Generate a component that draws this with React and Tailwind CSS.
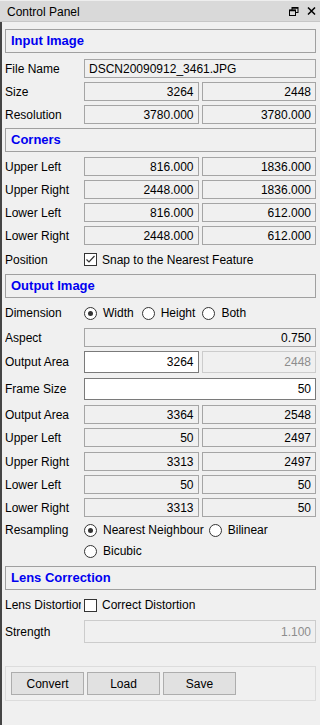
const font = { fontFamily: '"Liberation Sans", Arial, sans-serif' }

function Header({ children, className = '' }) {
  return (
    <div
      className={`h-[24px] border border-[#a0a0a0] flex items-center pl-[5px] text-[13px] font-bold text-[#0000f0] ${className}`}
    >
      {children}
    </div>
  )
}

function Field({ value, kind = 'ro', align = 'right', tall = false }) {
  const styles = {
    ro: 'bg-[#f0f0f0] border-[#a5a5a5] text-black',
    edit: 'bg-white border-[#7a7a7a] text-black',
    off: 'bg-[#f0f0f0] border-[#cccccc] text-[#8d8d8d]',
  }
  return (
    <div
      className={`${tall ? 'h-[22px]' : 'h-[19px]'} border flex items-center px-[4px] whitespace-nowrap overflow-hidden ${
        align === 'right' ? 'justify-end' : 'justify-start'
      } ${styles[kind]}`}
    >
      {value}
    </div>
  )
}

function Row({ label, children, className = '' }) {
  return (
    <div className={`flex items-center ${className}`}>
      <div className="w-[79px] shrink-0">
        <div className="max-w-[76px] whitespace-nowrap overflow-hidden">{label}</div>
      </div>
      <div className="flex-1 min-w-0">{children}</div>
    </div>
  )
}

function Pair({ label, a, b, className = '', kindA = 'ro', kindB = 'ro', tall = false }) {
  return (
    <Row label={label} className={className}>
      <div className="grid grid-cols-2 gap-[3px]">
        <Field value={a} kind={kindA} tall={tall} />
        <Field value={b} kind={kindB} tall={tall} />
      </div>
    </Row>
  )
}

function Radio({ checked, label, className = '' }) {
  return (
    <div className={`flex items-center ${className}`}>
      <span className="w-[13px] h-[13px] rounded-full border border-[#333333] bg-white flex items-center justify-center shrink-0">
        {checked && <span className="w-[5px] h-[5px] rounded-full bg-[#333333]" />}
      </span>
      <span className="ml-[6px] whitespace-nowrap">{label}</span>
    </div>
  )
}

function Checkbox({ checked, label }) {
  return (
    <div className="flex items-center">
      <span className="w-[13px] h-[13px] border border-[#333333] bg-white flex items-center justify-center shrink-0">
        {checked && (
          <svg width="11" height="11" viewBox="0 0 11 11">
            <path d="M1.5 5.5 L4 8 L9.5 2" fill="none" stroke="#333333" strokeWidth="1.2" />
          </svg>
        )}
      </span>
      <span className="ml-[5px] whitespace-nowrap">{label}</span>
    </div>
  )
}

function Btn({ children }) {
  return (
    <button className="w-[73px] h-[23px] bg-[#e1e1e1] border border-[#adadad] text-[12px] text-black flex items-center justify-center">
      {children}
    </button>
  )
}

export default function App() {
  return (
    <div className="w-[320px] h-[725px] bg-[#f0f0f0] text-[12px] text-black flex flex-col" style={font}>
      {/* title bar */}
      <div className="h-[22px] shrink-0 bg-[#d9d9d9] border-t border-[#eeeeee] border-b border-b-[#c6c6c6] flex items-center pl-[7px] pr-[4px]">
        <span className="flex-1 pt-[1px]">Control Panel</span>
        <svg width="10" height="9" viewBox="0 0 10 9" className="mr-[8px]">
          <rect x="3" y="0.5" width="6" height="5" fill="none" stroke="#000" />
          <rect x="0.5" y="3" width="6" height="5.5" fill="#d9d9d9" stroke="#000" />
          <line x1="0.5" y1="3.5" x2="6.5" y2="3.5" stroke="#000" strokeWidth="1.5" />
          <line x1="3" y1="1" x2="9" y2="1" stroke="#000" strokeWidth="1.5" />
        </svg>
        <svg width="9" height="8" viewBox="0 0 9 8">
          <path d="M1 0.5 L8 7.5 M8 0.5 L1 7.5" stroke="#000" strokeWidth="1.5" />
        </svg>
      </div>

      <div className="flex-1 border-l-2 border-[#454545] pl-[3px] pr-[4px] flex flex-col">
        <Header className="mt-[7px]">Input Image</Header>
        <Row label="File Name" className="mt-[6px]">
          <Field value="DSCN20090912_3461.JPG" align="left" />
        </Row>
        <Pair label="Size" a="3264" b="2448" className="mt-[4px]" />
        <Pair label="Resolution" a="3780.000" b="3780.000" className="mt-[4px]" />

        <Header className="mt-[4px]">Corners</Header>
        <Pair label="Upper Left" a="816.000" b="1836.000" className="mt-[5px]" />
        <Pair label="Upper Right" a="2448.000" b="1836.000" className="mt-[4px]" />
        <Pair label="Lower Left" a="816.000" b="612.000" className="mt-[4px]" />
        <Pair label="Lower Right" a="2448.000" b="612.000" className="mt-[4px]" />
        <Row label="Position" className="mt-[7px] h-[15px]">
          <Checkbox checked label="Snap to the Nearest Feature" />
        </Row>

        <Header className="mt-[7px]">Output Image</Header>
        <Row label="Dimension" className="mt-[7px] h-[16px]">
          <div className="flex items-center">
            <Radio checked label="Width" />
            <Radio label="Height" className="ml-[8px]" />
            <Radio label="Both" className="ml-[7px]" />
          </div>
        </Row>
        <Row label="Aspect" className="mt-[7px]">
          <Field value="0.750" />
        </Row>
        <Pair label="Output Area" a="3264" b="2448" kindA="edit" kindB="off" tall className="mt-[4px]" />
        <Row label="Frame Size" className="mt-[5px]">
          <Field value="50" kind="edit" tall />
        </Row>
        <Pair label="Output Area" a="3364" b="2548" className="mt-[5px]" />
        <Pair label="Upper Left" a="50" b="2497" className="mt-[4px]" />
        <Pair label="Upper Right" a="3313" b="2497" className="mt-[5px]" />
        <Pair label="Lower Left" a="50" b="50" className="mt-[4px]" />
        <Pair label="Lower Right" a="3313" b="50" className="mt-[4px]" />
        <div className="flex mt-[5px]">
          <div className="w-[79px] shrink-0 h-[16px] flex items-center">Resampling</div>
          <div className="flex flex-col gap-[5px]">
            <div className="flex items-center h-[16px]">
              <Radio checked label="Nearest Neighbour" />
              <Radio label="Bilinear" className="ml-[5px]" />
            </div>
            <div className="flex items-center h-[16px]">
              <Radio label="Bicubic" />
            </div>
          </div>
        </div>

        <Header className="mt-[7px]">Lens Correction</Header>
        <Row label="Lens Distortion" className="mt-[7px] h-[16px]">
          <Checkbox label="Correct Distortion" />
        </Row>
        <Row label="Strength" className="mt-[7px]">
          <div className="h-[23px] border border-[#cccccc] bg-[#f0f0f0] text-[#8d8d8d] flex items-center justify-end px-[4px]">
            1.100
          </div>
        </Row>

        <div className="mt-[23px] h-[35px] border border-[#dcdcdc] flex items-center gap-[3px] pl-[5px]">
          <Btn>Convert</Btn>
          <Btn>Load</Btn>
          <Btn>Save</Btn>
        </div>
      </div>
    </div>
  )
}
